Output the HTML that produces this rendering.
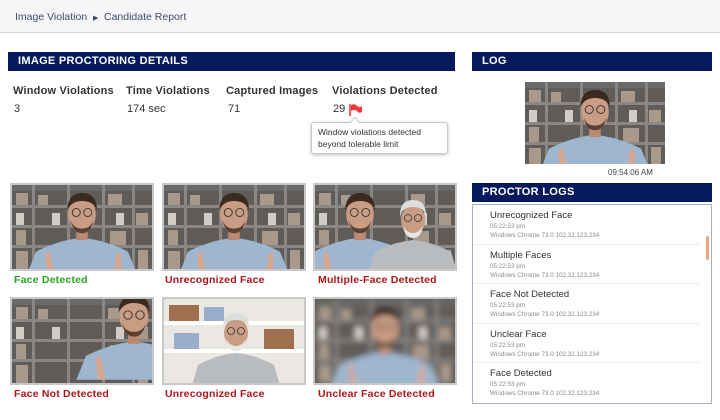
<!DOCTYPE html>
<html><head><meta charset="utf-8"><style>
*{margin:0;padding:0;box-sizing:border-box}
body{width:720px;height:420px;background:#fff;font-family:"Liberation Sans",sans-serif;position:relative;overflow:hidden;color:#222}
.top{position:absolute;left:0;top:0;width:720px;height:33px;background:#f6f6f8;border-bottom:1px solid #d4d4d8}
.crumb{position:absolute;top:11px;font-size:10.5px;color:#3d4a66}
.hdr{position:absolute;height:19px;background:#041a5c;color:#fff;font-weight:bold;font-size:11px;padding-left:10px;line-height:19px;letter-spacing:.3px}
.lab{position:absolute;top:85px;font-size:11px;font-weight:bold;color:#333;letter-spacing:.2px}
.val{position:absolute;top:103px;font-size:11px;color:#333}
.ph{position:absolute;width:144px;height:88px;border:2px solid #c8c8c8;overflow:hidden;background:#5d5955}
.ph svg{display:block;width:140px;height:84px}
.cap{position:absolute;font-size:10.5px;font-weight:bold;letter-spacing:.2px}
.r{color:#b0151a}.g{color:#2aa322}
.tip{position:absolute;left:311px;top:122px;width:137px;height:32px;border:1px solid #c9c9c9;border-radius:3px;background:#fff;box-shadow:0 1px 3px rgba(0,0,0,.25);font-size:8.5px;color:#333;padding:3px 6px;line-height:12px}
.box{position:absolute;left:472px;top:204px;width:240px;height:200px;border:1px solid #a9b0c4;overflow:hidden}
.it{height:39.5px;border-bottom:1.5px solid #eee;padding-left:17px;margin-right:10px}
.it b{display:block;font-weight:normal;font-size:9.5px;color:#333;padding-top:5px}
.it i{display:block;font-style:normal;font-size:6.3px;color:#888;margin-top:2px}
</style></head><body>
<svg width="0" height="0" style="position:absolute">
<defs>
<g id="room">
<rect width="140" height="84" fill="#5f5c5a"/>
<rect x="0" y="0" width="140" height="6" fill="#6c6a68"/>
<g fill="#8a8784"><rect x="0" y="20" width="140" height="3"/><rect x="0" y="40" width="140" height="3"/><rect x="0" y="60" width="140" height="3"/>
<rect x="20" y="0" width="3" height="84"/><rect x="55" y="0" width="3" height="84"/><rect x="90" y="0" width="3" height="84"/><rect x="120" y="0" width="3" height="84"/></g>
<g fill="#a8998a"><rect x="4" y="8" width="12" height="12"/><rect x="26" y="10" width="10" height="10"/><rect x="96" y="9" width="14" height="11"/><rect x="124" y="28" width="12" height="12"/><rect x="4" y="45" width="10" height="15"/><rect x="98" y="46" width="16" height="14"/><rect x="4" y="66" width="12" height="18"/><rect x="126" y="65" width="10" height="19"/></g>
<g fill="#d0ccc6"><rect x="40" y="28" width="8" height="12"/><rect x="4" y="28" width="8" height="12"/><rect x="104" y="28" width="8" height="12"/></g>
</g>
<g id="man">
<path d="M22 84 L30 64 Q50 54 70 52 Q90 54 110 64 L118 84Z" fill="#9fb6cf"/>
<rect x="65" y="42" width="10" height="12" fill="#b98a72"/>
<ellipse cx="70" cy="32" rx="12" ry="15" fill="#c99c84"/>
<path d="M57 28 Q58 13 70 13 Q83 13 83 28 Q80 20 70 20 Q61 20 57 28Z" fill="#3a2a20"/>
<path d="M60 36 Q62 48 70 48 Q78 48 80 36 Q78 44 70 44 Q62 44 60 36Z" fill="#5a4032"/>
<g stroke="#333" stroke-width=".8" fill="none"><circle cx="65" cy="30" r="3.5"/><circle cx="75" cy="30" r="3.5"/></g>
<path d="M40 84 L38 66 L42 64 L46 84Z M98 84 L100 66 L104 64 L104 84Z" fill="#d8a88e"/>
</g>
<g id="old">
<path d="M16 84 L22 64 Q40 54 60 52 Q80 54 98 64 L104 84Z" fill="#b9bcbe"/>
<ellipse cx="60" cy="32" rx="12" ry="15" fill="#c99c84"/>
<path d="M47 30 Q46 12 60 12 Q74 12 73 30 Q72 19 60 19 Q48 19 47 30Z" fill="#ddd"/>
<path d="M50 38 Q52 50 60 50 Q68 50 70 38 Q66 45 60 45 Q54 45 50 38Z" fill="#e6e6e6"/>
<g stroke="#333" stroke-width=".8" fill="none"><circle cx="55" cy="30" r="3.5"/><circle cx="65" cy="30" r="3.5"/></g>
</g>
<g id="bigman"><g transform="translate(-10.5,-7) scale(1.15)"><use href="#man"/></g></g>
<filter id="bl"><feGaussianBlur stdDeviation="3"/></filter>
</defs></svg>

<div class="top"></div>
<div class="crumb" style="left:15px">Image Violation</div>
<div class="crumb" style="left:93px;font-size:7px;top:14px">&#9654;</div>
<div class="crumb" style="left:104px">Candidate Report</div>

<div class="hdr" style="left:8px;top:52px;width:447px">IMAGE PROCTORING DETAILS</div>
<div class="lab" style="left:13px">Window Violations</div>
<div class="lab" style="left:126px">Time Violations</div>
<div class="lab" style="left:226px">Captured Images</div>
<div class="lab" style="left:332px">Violations Detected</div>
<div class="val" style="left:14px">3</div>
<div class="val" style="left:127px">174 sec</div>
<div class="val" style="left:228px">71</div>
<div class="val" style="left:333px">29</div>
<svg style="position:absolute;left:349px;top:104px" width="14" height="12"><path d="M1 0V12" stroke="#e33" stroke-width="1.5"/><path d="M2 1Q6 -1 8 2Q11 4 13 2V8Q10 10 8 7Q5 5 2 7Z" fill="#f03a3a"/></svg>
<div class="tip">Window violations detected beyond tolerable limit</div>
<svg style="position:absolute;left:350px;top:117px" width="10" height="7"><path d="M0 6L5 0L10 6" fill="#fff" stroke="#c9c9c9"/></svg>

<div class="ph" style="left:10px;top:183px"><svg viewBox="0 0 140 84"><use href="#room"/><use href="#bigman"/></svg></div>
<div class="ph" style="left:162px;top:183px"><svg viewBox="0 0 140 84"><use href="#room"/><use href="#bigman"/></svg></div>
<div class="ph" style="left:313px;top:183px"><svg viewBox="0 0 140 84"><use href="#room"/><g transform="translate(-25,0)"><use href="#bigman"/></g><g transform="translate(38,3)"><use href="#old"/></g></svg></div>
<div class="ph" style="left:10px;top:297px"><svg viewBox="0 0 140 84"><use href="#room"/><g transform="translate(38,-20) scale(1.2)"><use href="#man"/></g></svg></div>
<div class="ph" style="left:162px;top:297px;background:#eee"><svg viewBox="0 0 140 84"><rect width="140" height="84" fill="#ebe8e4"/><g fill="#fff"><rect y="22" width="140" height="4"/><rect y="50" width="140" height="4"/></g><g fill="#a0704e"><rect x="5" y="6" width="30" height="16"/><rect x="100" y="30" width="30" height="20"/></g><g fill="#9aaecc"><rect x="40" y="8" width="20" height="14"/><rect x="10" y="34" width="25" height="16"/></g><g transform="translate(12,2)"><use href="#old"/></g></svg></div>
<div class="ph" style="left:313px;top:297px"><svg viewBox="0 0 140 84"><g filter="url(#bl)"><use href="#room"/><use href="#bigman"/></g></svg></div>

<div class="cap g" style="left:14px;top:274px">Face Detected</div>
<div class="cap r" style="left:165px;top:274px">Unrecognized Face</div>
<div class="cap r" style="left:318px;top:274px">Multiple-Face Detected</div>
<div class="cap r" style="left:14px;top:388px">Face Not Detected</div>
<div class="cap r" style="left:165px;top:388px">Unrecognized Face</div>
<div class="cap r" style="left:318px;top:388px">Unclear Face Detected</div>

<div class="hdr" style="left:472px;top:52px;width:240px">LOG</div>
<div class="ph" style="left:525px;top:82px;width:140px;height:82px;border:none"><svg viewBox="0 0 140 84"><use href="#room"/><use href="#bigman"/></svg></div>
<div style="position:absolute;left:608px;top:168px;font-size:8px;color:#444">09:54:06 AM</div>

<div class="hdr" style="left:472px;top:183px;width:240px">PROCTOR LOGS</div>
<div class="box">
<div class="it"><b>Unrecognized Face</b><i>05:22:53 pm</i><i>Windows Chrome 73.0 102.32.123.234</i></div>
<div class="it"><b>Multiple Faces</b><i>05:22:53 pm</i><i>Windows Chrome 73.0 102.32.123.234</i></div>
<div class="it"><b>Face Not Detected</b><i>05:22:53 pm</i><i>Windows Chrome 73.0 102.32.123.234</i></div>
<div class="it"><b>Unclear Face</b><i>05:22:53 pm</i><i>Windows Chrome 73.0 102.32.123.234</i></div>
<div class="it" style="border:none"><b>Face Detected</b><i>05:22:53 pm</i><i>Windows Chrome 73.0 102.32.123.234</i></div>
<div style="position:absolute;left:233px;top:31px;width:3px;height:24px;background:#f2a77a;border-radius:2px"></div>
</div>
</body></html>
